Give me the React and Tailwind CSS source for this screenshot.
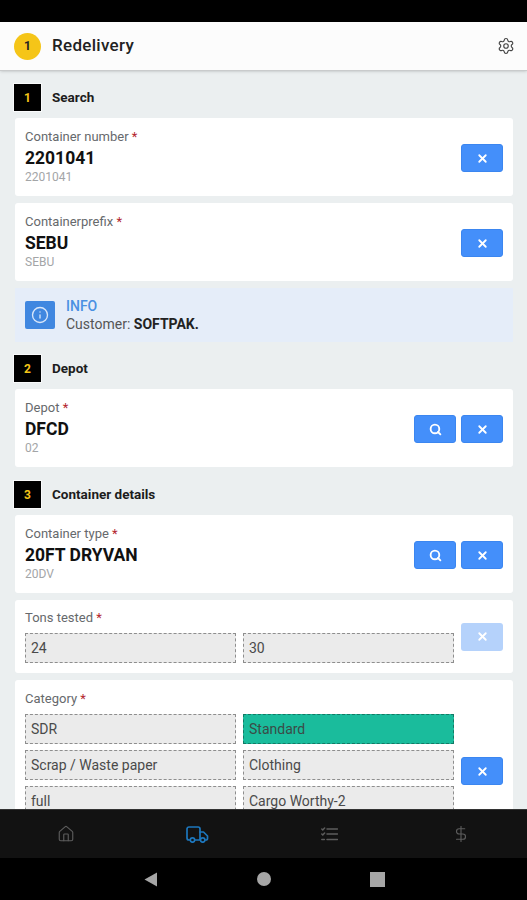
import { Settings, Home, DollarSign, Search, X, Info } from "lucide-react";

function IconButton({ icon: Icon = X, faded }) {
  return (
    <div
      className={
        "flex h-[28px] w-[42px] items-center justify-center rounded-[3px] " +
        (faded ? "bg-[#b5d2fb]" : "bg-[#448ffa] border border-[#3b86f0]")
      }
    >
      <Icon size={13} strokeWidth={3.4} className="text-white" />
    </div>
  );
}

function SectionTitle({ number, title }) {
  return (
    <div className="-ml-px flex h-[27px] items-center gap-[11px]">
      <div className="flex h-[27px] w-[27px] items-center justify-center bg-black text-[12px] font-bold text-[#f5c518] ring-1 ring-white/70">
        {number}
      </div>
      <div className="text-[13.5px] font-bold text-[#1c1c1c]">{title}</div>
    </div>
  );
}

function Label({ children }) {
  return (
    <div className="text-[13px] leading-[16px] text-[#66696c]">
      {children} <span className="text-[#b3262e]">*</span>
    </div>
  );
}

function ValueCard({ label, value, code, search }) {
  return (
    <div className="flex h-[78px] items-center justify-between rounded-[3px] bg-white pl-[10px] pr-[10px]">
      <div>
        <Label>{label}</Label>
        <div className="mt-[2px] text-[17.5px] font-bold leading-[22px] text-[#111]">{value}</div>
        <div className="mt-[1px] text-[12px] leading-[15px] text-[#a3a5a7]">{code}</div>
      </div>
      <div className="flex gap-[5px] pt-[2px]">
        {search && <IconButton icon={Search} />}
        <IconButton />
      </div>
    </div>
  );
}

function Choice({ children, active }) {
  return (
    <div
      className={
        "flex h-[30px] items-center border border-dashed px-[5px] text-[14px] " +
        (active
          ? "border-[#137a66] bg-[#1abc9c] text-[#3a4b47]"
          : "border-[#8e8e8e] bg-[#ebebeb] text-[#4a4a4a]")
      }
    >
      {children}
    </div>
  );
}

function TruckIcon() {
  return (
    <svg width="23" height="17" viewBox="0 0 23 17" fill="none" stroke="#1d77bd" strokeWidth="1.7" strokeLinecap="round" strokeLinejoin="round">
      <path d="M4 14H3a2 2 0 0 1-2-2V3a2 2 0 0 1 2-2h9a2 2 0 0 1 2 2v11H9" />
      <path d="M14 6h3.5l4 4v2.5a1.5 1.5 0 0 1-1.5 1.5h-.5" />
      <circle cx="6.5" cy="14" r="2.2" />
      <circle cx="16.7" cy="14" r="2.2" />
    </svg>
  );
}

function ListIcon() {
  return (
    <svg width="17" height="14" viewBox="0 0 17 14" fill="none" stroke="#5d5d5d" strokeWidth="1.5" strokeLinecap="round">
      <path d="M6 2h10.5M6 7h10.5M6 12.5h10.5" />
      <path d="M0.8 2l1 1L3.6 1M0.8 7l1 1 1.8-2M0.8 12.5h2.6" />
    </svg>
  );
}

export default function App() {
  return (
    <div className="flex h-[900px] w-[527px] flex-col overflow-hidden bg-black font-['Roboto',sans-serif]">
      {/* status bar */}
      <div className="h-[22px] shrink-0 bg-black" />

      <div className="z-10 flex h-[49px] shrink-0 items-center justify-between border-b border-[#c9cbcc] bg-[#fcfcfc] pl-[14px] pr-[12px] shadow-sm">
        <div className="flex items-center gap-[11px]">
          <div className="flex h-[27px] w-[27px] items-center justify-center rounded-full bg-[#f5c518] text-[12px] font-bold text-[#222]">
            1
          </div>
          <div className="text-[17px] font-medium tracking-[0.3px] text-[#222]">Redelivery</div>
        </div>
        <Settings size={18} strokeWidth={1.5} className="text-[#444]" />
      </div>

      <div className="flex min-h-0 flex-1 flex-col overflow-hidden bg-[#ebeff0] pl-[15px] pr-[14px] pt-[13px]">
        <SectionTitle number="1" title="Search" />
        <div className="mt-[7px] flex flex-col gap-[7px]">
          <ValueCard label="Container number" value="2201041" code="2201041" />
          <ValueCard label="Containerprefix" value="SEBU" code="SEBU" />
          <div className="flex h-[54px] items-center gap-[11px] bg-[#e5edf9] pl-[10px]">
            <div className="flex h-[28px] w-[30px] items-center justify-center rounded-[2px] bg-[#4087e0]">
              <Info size={18} strokeWidth={1.8} className="text-[#d8e6fa]" />
            </div>
            <div className="text-[14px] leading-[18px]">
              <div className="font-medium text-[#4a90e2]">INFO</div>
              <div className="text-[#555]">
                Customer: <span className="font-bold text-[#222]">SOFTPAK.</span>
              </div>
            </div>
          </div>
        </div>

        <div className="mt-[13px]">
          <SectionTitle number="2" title="Depot" />
        </div>
        <div className="mt-[7px]">
          <ValueCard label="Depot" value="DFCD" code="02" search />
        </div>

        <div className="mt-[14px]">
          <SectionTitle number="3" title="Container details" />
        </div>
        <div className="mt-[7px] flex flex-col gap-[7px]">
          <ValueCard label="Container type" value="20FT DRYVAN" code="20DV" search />

          <div className="flex h-[73px] items-center gap-[7px] rounded-[3px] bg-white pl-[10px] pr-[10px]">
            <div className="flex-1">
              <Label>Tons tested</Label>
              <div className="mt-[7px] grid grid-cols-2 gap-[7px]">
                <Choice>24</Choice>
                <Choice>30</Choice>
              </div>
            </div>
            <IconButton faded />
          </div>

          <div className="flex h-[160px] gap-[7px] rounded-[3px] bg-white pl-[10px] pr-[10px] pt-[11px]">
            <div className="flex-1">
              <Label>Category</Label>
              <div className="mt-[7px] grid grid-cols-2 gap-x-[7px] gap-y-[6px]">
                <Choice>SDR</Choice>
                <Choice active>Standard</Choice>
                <Choice>Scrap / Waste paper</Choice>
                <Choice>Clothing</Choice>
                <Choice>full</Choice>
                <Choice>Cargo Worthy-2</Choice>
              </div>
            </div>
            <div className="mt-[66px]">
              <IconButton />
            </div>
          </div>
        </div>
      </div>

      {/* tab bar */}
      <div className="z-10 flex h-[49px] shrink-0 items-center border-t border-[#333] bg-[#121212]">
        <div className="flex flex-1 justify-center">
          <Home size={18} strokeWidth={1.5} className="text-[#5d5d5d]" />
        </div>
        <div className="flex flex-1 justify-center">
          <TruckIcon />
        </div>
        <div className="flex flex-1 justify-center">
          <ListIcon />
        </div>
        <div className="flex flex-1 justify-center">
          <DollarSign size={18} strokeWidth={1.5} className="text-[#5d5d5d]" />
        </div>
      </div>

      {/* android nav */}
      <div className="flex h-[42px] shrink-0 items-center justify-center gap-[99px] bg-black pl-[1px]">
        <svg width="14" height="15" viewBox="0 0 14 15">
          <path d="M13 0.5V14.5L0.5 7.5Z" fill="#a6a6a6" />
        </svg>
        <div className="h-[14px] w-[14px] rounded-full bg-[#a6a6a6]" />
        <div className="h-[15px] w-[15px] bg-[#a6a6a6]" />
      </div>
    </div>
  );
}
